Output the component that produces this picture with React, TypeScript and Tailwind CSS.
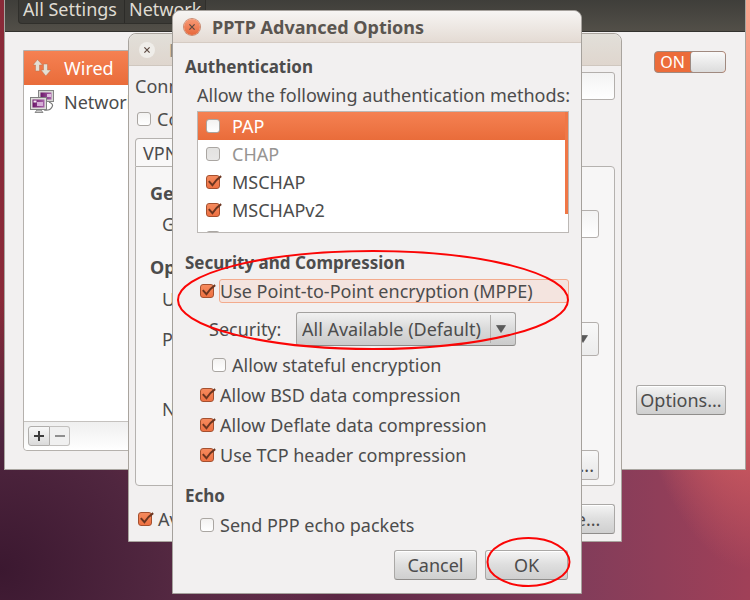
import { useState, type ReactNode } from "react";
import clsx from "clsx";

const authMethods = [
  { id: "pap", label: "PAP", checked: false },
  { id: "chap", label: "CHAP", checked: false, disabled: true },
  { id: "mschap", label: "MSCHAP", checked: true },
  { id: "mschapv2", label: "MSCHAPv2", checked: true },
];

const compressionOptions = [
  { id: "bsd", label: "Allow BSD data compression" },
  { id: "deflate", label: "Allow Deflate data compression" },
  { id: "tcp", label: "Use TCP header compression" },
];

type CheckProps = {
  id: string;
  defaultChecked?: boolean;
  disabled?: boolean;
  label?: string;
};

function Check({ id, defaultChecked = false, disabled, label }: CheckProps) {
  const [checked, setChecked] = useState(defaultChecked);

  return (
    <span className="grid size-[14px] shrink-0">
      <input
        type="checkbox"
        id={id}
        aria-label={label}
        checked={checked}
        disabled={disabled}
        onChange={(e) => setChecked(e.target.checked)}
        className="size-[14px] appearance-none rounded-[3px] border border-[#aaa6a2] bg-linear-to-b from-[#f3f2f1] to-white [grid-area:1/1] checked:border-[#a5502f] checked:from-[#f58a5d] checked:to-[#ee7142] disabled:from-[#e3e2e0] disabled:to-[#e8e7e6]"
      />
      {checked && (
        <svg
          viewBox="0 0 14 14"
          className="pointer-events-none size-[14px] overflow-visible [grid-area:1/1]"
        >
          <path
            d="M2.8 6.2 L6.4 10.2 Q9.8 4.8 15.2 1.2"
            fill="none"
            stroke="#6b3520"
            strokeWidth="2"
          />
        </svg>
      )}
    </span>
  );
}

function Button({ children, className }: { children: ReactNode; className?: string }) {
  return (
    <button
      type="button"
      className={clsx(
        "h-[30px] rounded-[3px] border border-[#aaa8a6] border-b-[#8f8d8b] bg-linear-to-b from-[#f4f4f4] via-[#dedede] to-[#cfcfcf] shadow-[inset_0_1px_0_#fff]",
        className
      )}
    >
      {children}
    </button>
  );
}

function CloseButton({ active }: { active?: boolean }) {
  return (
    <button
      type="button"
      aria-label="Close"
      className={clsx(
        "grid size-4 place-items-center rounded-full",
        active
          ? "bg-linear-to-b from-[#f79a76] to-[#e6673a] ring-1 ring-[#c98a70]"
          : "bg-[#efede9]"
      )}
    >
      <svg viewBox="0 0 8 8" className="size-2">
        <path d="M1.4 1.4 L6.6 6.6 M6.6 1.4 L1.4 6.6" stroke="#5c4940" strokeWidth="1.2" />
      </svg>
    </button>
  );
}

function Triangle() {
  return (
    <svg viewBox="0 0 10 8" className="h-2 w-[10px]">
      <path d="M0.500 0.500 H9.500 L5 7.500 Z" fill="#5a5a5a" stroke="#4c4c4c" strokeWidth="0.6" />
    </svg>
  );
}

function ArrowsIcon() {
  return (
    <svg viewBox="0 0 18 18" className="size-[18px]" fill="#e4dfd4" stroke="#b9714f" strokeWidth="0.5">
      <path d="M4.500 0.500 L9.500 6 H6.500 V12 H2.500 V6 H0 Z" />
      <path d="M10.500 5 H14.500 V11 H18 L12.800 17 L8 11 H10.500 Z" />
    </svg>
  );
}

function ProxyIcon() {
  return (
    <svg viewBox="0 0 24 24" className="size-6">
      <defs>
        <linearGradient id="screen" x1="0" y1="0" x2="1" y2="0">
          <stop offset="0" stopColor="#6b1568" />
          <stop offset="1" stopColor="#a964ab" />
        </linearGradient>
      </defs>
      <path d="M19 12 Q24 14 22 17 Q20 21 14 20" fill="none" stroke="#777" strokeWidth="1.2" />
      <rect x="8.500" y="0.500" width="15" height="11" fill="#d6d6d4" stroke="#858585" />
      <rect x="10.500" y="2.500" width="11" height="7" fill="url(#screen)" />
      <rect x="17" y="4" width="4" height="3" fill="#dcbcdd" />
      <path d="M5 22.500 H13 L11 20 H7 Z" fill="#ccc" stroke="#777" strokeWidth="0.8" />
      <rect x="0.500" y="7.500" width="16" height="12" fill="#deddda" stroke="#808080" />
      <rect x="2.500" y="9.500" width="12" height="8" fill="url(#screen)" />
      <rect x="3.500" y="10.500" width="3" height="2" fill="#f2e6f2" />
      <rect x="7" y="12" width="6" height="4" fill="#d5aed6" />
    </svg>
  );
}

function SettingsWindow() {
  return (
    <section className="absolute inset-x-1 top-0 border-x border-b border-[#a9a5a0] bg-[#f2f0f0]">
      <header className="h-8 border-b border-[#33322e] bg-linear-to-b from-[#3f3e3a] to-[#524f48] pl-[13px]">
        <nav className="flex h-6 w-fit rounded-b border border-t-0 border-[#302f2b] bg-[#3b3a36] leading-[18px] text-[#dfdbd2]">
          <button type="button" className="flex w-[106px] border-r border-[#2c2b28] pl-1 whitespace-nowrap">
            All Settings
          </button>
          <button type="button" className="flex w-20 pl-1">
            Network
          </button>
        </nav>
      </header>
      <div className="flex justify-between pt-[18px] pr-[19px] pb-[18px] pl-[18px]">
        <div className="flex h-[401px] w-60 flex-col rounded-b border border-[#b5b1ad] bg-white">
          <ul className="flex-1">
            <li className="flex h-[34px] items-center gap-[13px] bg-linear-to-b from-[#f58152] to-[#e96c3a] pl-[9px] text-white">
              <ArrowsIcon />
              <span>Wired</span>
            </li>
            <li className="flex h-[34px] items-center gap-[10px] pl-[6px]">
              <ProxyIcon />
              <span>Network proxy</span>
            </li>
          </ul>
          <div className="flex h-[29px] items-center rounded-b border-t border-[#c4c1be] bg-linear-to-b from-[#efefef] to-white pl-1">
            <button
              type="button"
              aria-label="Add"
              className="grid h-5 w-[22px] place-items-center rounded-l-[3px] border border-[#b0aeac] bg-linear-to-b from-[#f8f8f8] to-[#dadada]"
            >
              <svg viewBox="0 0 10 10" className="size-[10px]">
                <path d="M5 0 V10 M0 5 H10" stroke="#3c3c3c" strokeWidth="2" />
              </svg>
            </button>
            <button
              type="button"
              aria-label="Remove"
              className="grid h-5 w-5 place-items-center rounded-r-[3px] border border-l-0 border-[#c2c0be] bg-[#f0f0f0]"
            >
              <svg viewBox="0 0 10 10" className="size-[10px]">
                <path d="M0 5 H10" stroke="#8f8f8f" strokeWidth="2" />
              </svg>
            </button>
          </div>
        </div>
        <div className="flex flex-col items-end justify-between pt-px pb-9">
          <button
            type="button"
            role="switch"
            aria-checked="true"
            className="flex h-[22px] w-[72px] items-stretch rounded-[4px] border border-[#a08a80] bg-[#ec6c3a] text-base leading-5 text-white"
          >
            <span className="flex-1">ON</span>
            <span className="w-[35px] rounded-[3px] border-l border-[#9c8a82] bg-linear-to-b from-[#fafafa] to-[#dcdcdc]" />
          </button>
          <Button className="w-[90px]">Options...</Button>
        </div>
      </div>
    </section>
  );
}

function ConnectionDialog() {
  return (
    <section className="absolute top-[33px] left-32 w-[494px] rounded-t-lg border border-[#a9a49e] bg-[#f2f0f0]">
      <header className="flex h-8 items-center gap-[14px] rounded-t-lg border-b border-[#cfc7bf] bg-linear-to-b from-[#e2dfd9] to-[#dfd6ce] pl-[10px] font-bold text-[#8d8982]">
        <CloseButton />
        <h2>Editing VPN connection 1</h2>
      </header>
      <div className="px-[6px] pt-[6px] pb-[7px]">
        <div className="flex h-7 items-center gap-3">
          <label htmlFor="connection-name">Connection name:</label>
          <input
            id="connection-name"
            type="text"
            className="h-7 min-w-0 flex-1 rounded-[3px] border border-[#b3afac] bg-linear-to-b from-[#f3f3f3] to-white"
          />
        </div>
        <div className="flex h-[38px] items-center gap-[6px] pl-[2px]">
          <Check id="auto-connect" />
          <label htmlFor="auto-connect">Connect automatically</label>
        </div>
        <button
          type="button"
          className="flex h-7 w-14 items-center rounded-t border border-b-0 border-[#b5b2af] bg-[#f9f8f8] pl-[7px]"
        >
          VPN
        </button>
        <div className="h-[320px] rounded-b rounded-tr border border-[#b5b2af] bg-[#f7f6f6] pt-[14px] pr-[15px] pl-[14px]">
          <h3 className="leading-6 font-bold">General</h3>
          <div className="flex h-[38px] items-center gap-3 pl-3">
            <label htmlFor="gateway">Gateway:</label>
            <input
              id="gateway"
              type="text"
              className="h-7 min-w-0 flex-1 rounded-[3px] border border-[#b3afac] bg-linear-to-b from-[#f3f3f3] to-white"
            />
          </div>
          <h3 className="mt-3 leading-6 font-bold">Optional</h3>
          <p className="pl-3 leading-10">User name:</p>
          <div className="flex h-10 items-center justify-between pl-3">
            <span>Password:</span>
            <button
              type="button"
              aria-label="Password storage"
              className="flex h-[34px] w-20 items-center justify-end rounded-[3px] border border-[#b3afac] bg-linear-to-b from-[#f8f8f8] to-[#ececec] pr-[10px]"
            >
              <Triangle />
            </button>
          </div>
          <p className="mt-[30px] pl-3 leading-10">NT Domain:</p>
          <div className="mt-[21px] flex justify-end">
            <button
              type="button"
              className="h-[30px] rounded-[3px] border border-[#b3afac] bg-linear-to-b from-[#f8f8f8] to-[#e6e6e6] px-1"
            >
              Advanced...
            </button>
          </div>
        </div>
        <div className="mt-[18px] flex h-[30px] items-center justify-between pl-[3px]">
          <div className="flex items-center gap-[6px]">
            <Check id="all-users" defaultChecked />
            <label htmlFor="all-users">Available to all users</label>
          </div>
          <Button className="w-[83px]">Save...</Button>
        </div>
      </div>
    </section>
  );
}

function AdvancedOptionsDialog() {
  return (
    <section className="absolute top-[10px] left-[172px] w-[410px] rounded-t-lg border border-[#a5a19c] bg-[#f2f0f0]">
      <header className="flex h-8 items-center gap-3 rounded-t-lg border-b border-[#d5cbc3] bg-linear-to-b from-[#f7f5f3] to-[#e4dbd4] pl-[11px] font-bold text-[#5a5550]">
        <CloseButton active />
        <h2>PPTP Advanced Options</h2>
      </header>

      <form className="px-3 pt-3 pb-[13px]" onSubmit={(e) => e.preventDefault()}>
        <h3 className="text-[17px] leading-6 font-bold">Authentication</h3>
        <p className="pl-3 leading-8 whitespace-nowrap">
          Allow the following authentication methods:
        </p>
        <div className="ml-3 flex h-[122px] overflow-hidden border border-[#bcb8b5] bg-white">
          <ul className="flex-1">
            {authMethods.map((method, i) => (
              <li
                key={method.id}
                className={clsx(
                  "flex h-7 items-center gap-3 pl-2",
                  i === 0 && "bg-linear-to-b from-[#f58152] to-[#e96c3a] text-white",
                  method.disabled && "text-[#969492]"
                )}
              >
                <Check id={method.id} defaultChecked={method.checked} disabled={method.disabled} />
                <label htmlFor={method.id}>{method.label}</label>
              </li>
            ))}
            <li className="flex h-7 items-center pl-2">
              <Check id="eap" label="EAP" />
            </li>
          </ul>
          <div className="h-[102px] w-[3px] bg-[#f07746]" />
        </div>

        <h3 className="mt-[18px] text-[17px] leading-6 font-bold">Security and Compression</h3>
        <div className="flex h-8 items-center gap-[5px] pl-[15px]">
          <Check id="mppe" defaultChecked />
          <label
            htmlFor="mppe"
            className="h-6 flex-1 rounded-[3px] border border-[#f3ab8d] bg-[#f4e4df] leading-[22px]"
          >
            Use Point-to-Point encryption (MPPE)
          </label>
        </div>
        <div className="flex h-[43px] items-center pl-6">
          <label htmlFor="security" className="w-[87px]">
            Security:
          </label>
          <div className="relative">
            <select
              id="security"
              className="h-[34px] w-[220px] appearance-none rounded-[3px] border border-[#a3a19f] border-b-[#8b8987] bg-linear-to-b from-[#f1f1f1] via-[#dadada] to-[#cbcbcb] pl-[5px]"
            >
              <option>All Available (Default)</option>
            </select>
            <span className="pointer-events-none absolute inset-y-[3px] right-0 flex w-[26px] items-center border-l border-[#b0aeac] pl-[5px]">
              <Triangle />
            </span>
          </div>
        </div>
        <div className="flex h-[30px] items-center gap-[6px] pl-[27px]">
          <Check id="stateful" />
          <label htmlFor="stateful">Allow stateful encryption</label>
        </div>
        {compressionOptions.map((option) => (
          <div key={option.id} className="flex h-[30px] items-center gap-[6px] pl-[15px]">
            <Check id={option.id} defaultChecked />
            <label htmlFor={option.id}>{option.label}</label>
          </div>
        ))}

        <h3 className="mt-[14px] text-[17px] leading-6 font-bold">Echo</h3>
        <div className="flex h-[34px] items-center gap-[6px] pl-[15px]">
          <Check id="echo" />
          <label htmlFor="echo">Send PPP echo packets</label>
        </div>

        <div className="flex justify-end gap-2 pt-2 pr-px">
          <Button className="w-[83px]">Cancel</Button>
          <Button className="w-[83px]">OK</Button>
        </div>
      </form>

      {/* Red marker rings */}
      <svg
        viewBox="0 0 410 584"
        className="pointer-events-none absolute -top-px -left-px h-[584px] w-[410px]"
        fill="none"
        stroke="#fb0505"
        strokeWidth="2"
      >
        <ellipse cx="201" cy="290" rx="195" ry="49" />
        <ellipse cx="356.500" cy="552" rx="41" ry="24" />
      </svg>
    </section>
  );
}

function App() {
  return (
    <main className="relative min-h-screen overflow-hidden bg-[radial-gradient(ellipse_40%_45%_at_0%_95%,#3b1830_0%,#50263f_50%,transparent_100%),radial-gradient(ellipse_22%_95%_at_100%_0%,#f9a590_0%,#f08070_40%,#d05c60_75%,transparent_100%),linear-gradient(to_right,#8a2a38_0%,#69334e_22%,#5c2744_45%,#803c5a_76%,#a04058_100%)] font-['Noto_Sans','Open_Sans',sans-serif] text-lg leading-6 text-[#4c4c4c]">
      <SettingsWindow />
      <ConnectionDialog />
      <AdvancedOptionsDialog />
    </main>
  );
}

export default App;
